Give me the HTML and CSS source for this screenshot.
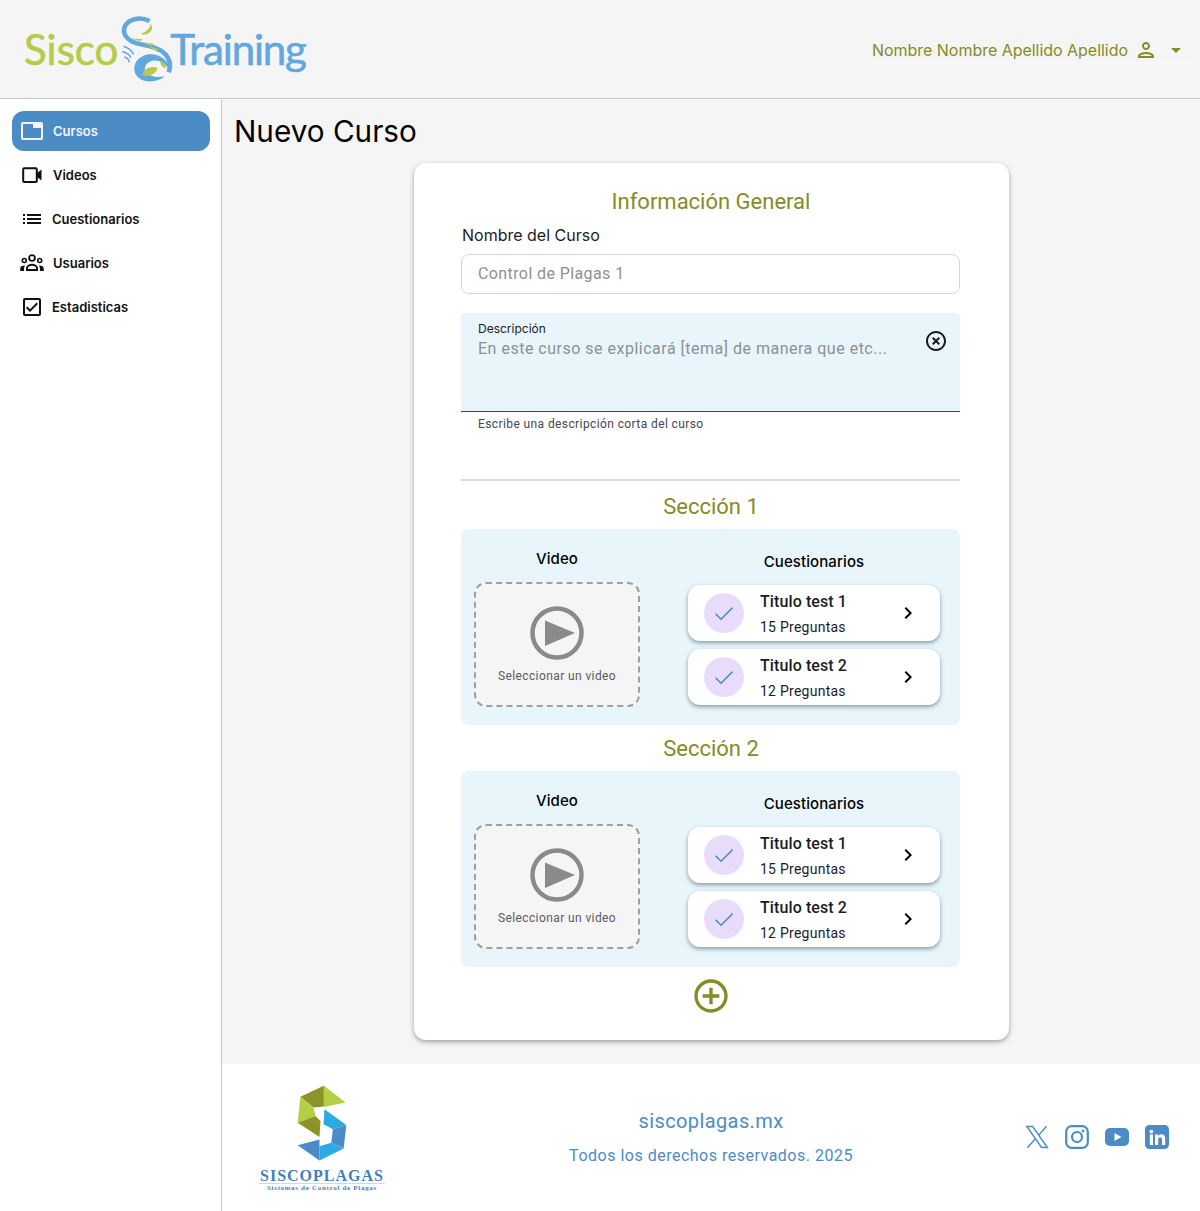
FILE: index.html
```html
<!DOCTYPE html>
<html lang="es">
<head>
  <meta charset="UTF-8">
  <meta name="viewport" content="width=device-width, initial-scale=1.0">
  <title>Nuevo Curso</title>
  <link rel="stylesheet" href="styles.css">
</head>
<body>
  <header class="topbar">
    <div class="brand">
      <span class="brand-sisco">Sisco</span>
      <svg class="brand-mark" viewBox="0 0 170 210" aria-hidden="true">
        <path d="M88 24C62 10 26 16 14 40 6 60 18 78 42 88 72 99 112 98 136 124 150 140 152 160 146 178" fill="none" stroke="#62a8df" stroke-width="14"/>
        <path d="M46 150C36 172 46 198 76 204 98 208 120 202 134 190 112 195 90 192 78 178 70 168 74 156 86 148 104 136 130 142 150 172 144 136 112 120 84 124 66 128 52 138 46 150Z" fill="#62a8df"/>
        <path d="M10 100C22 104 34 112 40 124M6 116C18 118 28 124 32 134M12 132C22 134 26 140 28 148" fill="none" stroke="#62a8df" stroke-width="4.5"/>
        <path d="M92 30C90 46 80 56 62 62 76 70 92 60 96 46Z" fill="#b5cc4a"/>
        <path d="M34 76L68 79 60 85ZM64 88L102 92 92 99ZM86 100L118 109 106 113Z" fill="#b5cc4a"/>
        <path d="M66 186C70 166 92 158 112 164 110 180 92 192 66 186Z" fill="#b5cc4a"/>
        <path d="M120 144C130 146 136 152 138 166 128 164 120 156 120 144Z" fill="#b5cc4a"/>
      </svg>
      <span class="brand-training">Training</span>
    </div>
    <div class="user-menu">
      <span class="user-name">Nombre Nombre Apellido Apellido</span>
      <svg class="icon" viewBox="0 0 24 24"><path d="M12 6c1.1 0 2 .9 2 2s-.9 2-2 2-2-.9-2-2 .9-2 2-2m0 10c2.7 0 5.8 1.29 6 2H6c.23-.72 3.31-2 6-2m0-12C9.79 4 8 5.79 8 8s1.79 4 4 4 4-1.79 4-4-1.79-4-4-4zm0 10c-2.67 0-8 1.34-8 4v2h16v-2c0-2.66-5.33-4-8-4z"/></svg>
      <svg class="icon" viewBox="0 0 24 24"><path d="M7 10l5 5 5-5z"/></svg>
    </div>
  </header>

  <div class="layout">
    <nav class="sidebar">
      <a class="nav-item active">
        <svg class="icon" viewBox="0 0 24 24"><path d="M21 3H3c-1.1 0-2 .9-2 2v14c0 1.1.9 2 2 2h18c1.1 0 2-.9 2-2V5c0-1.1-.9-2-2-2zm0 16H3V5h10v4h8v10z"/></svg>
        <span>Cursos</span>
      </a>
      <a class="nav-item">
        <svg class="icon" viewBox="0 0 24 24"><rect x="3.2" y="5.2" width="13.6" height="13.8" rx="1" fill="none" stroke="currentColor" stroke-width="2"/><path d="M17 10l4.500-3.500v11L17 14z"/></svg>
        <span>Videos</span>
      </a>
      <a class="nav-item tight">
        <svg class="icon" viewBox="0 0 24 24"><path d="M3 13h2v-2H3v2zm0 4h2v-2H3v2zm0-8h2V7H3v2zm4 4h14v-2H7v2zm0 4h14v-2H7v2zM7 7v2h14V7H7z"/></svg>
        <span>Cuestionarios</span>
      </a>
      <a class="nav-item">
        <svg class="icon" viewBox="0 0 24 24"><circle cx="12" cy="7" r="2.900" fill="none" stroke="currentColor" stroke-width="1.800"/><circle cx="4.300" cy="9.500" r="2" fill="none" stroke="currentColor" stroke-width="1.600"/><circle cx="19.700" cy="9.500" r="2" fill="none" stroke="currentColor" stroke-width="1.600"/><path d="M7 19v-1.500c0-2.300 2.400-3.700 5-3.700s5 1.400 5 3.700V19z" fill="none" stroke="currentColor" stroke-width="2"/><path d="M.2 20v-2.300c0-2 1.800-3.200 4.800-3.200-.6.900-.9 1.900-.9 3v2.500zM23.800 20v-2.300c0-2-1.800-3.200-4.800-3.200.6.900.9 1.900.9 3v2.500z"/></svg>
        <span>Usuarios</span>
      </a>
      <a class="nav-item tight">
        <svg class="icon" viewBox="0 0 24 24"><path d="M19 3H5c-1.1 0-2 .9-2 2v14c0 1.1.9 2 2 2h14c1.1 0 2-.9 2-2V5c0-1.1-.9-2-2-2zm0 16H5V5h14v14zM17.99 9l-1.41-1.42-6.59 6.59-2.58-2.57-1.42 1.41 4 3.99z"/></svg>
        <span>Estadisticas</span>
      </a>
    </nav>

    <div class="content">
      <main class="main">
        <h1 class="page-title">Nuevo Curso</h1>

        <form class="card">
          <h2 class="olive-title">Información General</h2>
          <label class="field-label">Nombre del Curso</label>
          <div class="text-input">Control de Plagas 1</div>

          <div class="filled-input">
            <div>
              <div class="filled-label">Descripción</div>
              <div class="filled-value">En este curso se explicará [tema] de manera que etc...</div>
            </div>
            <svg class="icon" viewBox="0 0 24 24"><path d="M14.59 8L12 10.59 9.41 8 8 9.41 10.59 12 8 14.59 9.41 16 12 13.41 14.59 16 16 14.59 13.41 12 16 9.41 14.59 8zM12 2C6.47 2 2 6.47 2 12s4.47 10 10 10 10-4.47 10-10S17.53 2 12 2zm0 18c-4.41 0-8-3.59-8-8s3.59-8 8-8 8 3.59 8 8-3.59 8-8 8z"/></svg>
          </div>
          <div class="helper">Escribe una descripción corta del curso</div>

          <hr class="divider">

          <h2 class="olive-title section-title">Sección 1</h2>
          <section class="panel">
            <div class="video-col">
              <h3 class="col-title">Video</h3>
              <div class="dropzone">
                <svg class="play" viewBox="0 0 54 54"><circle cx="27" cy="27" r="24.5" fill="none" stroke="#8a8a8a" stroke-width="4.5"/><path d="M15 14.5L45 27 15 40z" fill="#8a8a8a"/></svg>
                <span>Seleccionar un video</span>
              </div>
            </div>
            <div class="quiz-col">
              <h3 class="col-title quiz-title">Cuestionarios</h3>
              <div class="quiz">
                <span class="quiz-check"><svg viewBox="0 0 24 24"><path d="M3.6 12.8L9 18.2 20.6 6.6"/></svg></span>
                <div class="quiz-text"><strong>Titulo test 1</strong><span>15 Preguntas</span></div>
                <svg class="icon" viewBox="0 0 24 24"><path d="M10 6L8.59 7.41 13.17 12l-4.58 4.59L10 18l6-6z"/></svg>
              </div>
              <div class="quiz">
                <span class="quiz-check"><svg viewBox="0 0 24 24"><path d="M3.6 12.8L9 18.2 20.6 6.6"/></svg></span>
                <div class="quiz-text"><strong>Titulo test 2</strong><span>12 Preguntas</span></div>
                <svg class="icon" viewBox="0 0 24 24"><path d="M10 6L8.59 7.41 13.17 12l-4.58 4.59L10 18l6-6z"/></svg>
              </div>
            </div>
          </section>

          <h2 class="olive-title section-title">Sección 2</h2>
          <section class="panel">
            <div class="video-col">
              <h3 class="col-title">Video</h3>
              <div class="dropzone">
                <svg class="play" viewBox="0 0 54 54"><circle cx="27" cy="27" r="24.5" fill="none" stroke="#8a8a8a" stroke-width="4.5"/><path d="M15 14.5L45 27 15 40z" fill="#8a8a8a"/></svg>
                <span>Seleccionar un video</span>
              </div>
            </div>
            <div class="quiz-col">
              <h3 class="col-title quiz-title">Cuestionarios</h3>
              <div class="quiz">
                <span class="quiz-check"><svg viewBox="0 0 24 24"><path d="M3.6 12.8L9 18.2 20.6 6.6"/></svg></span>
                <div class="quiz-text"><strong>Titulo test 1</strong><span>15 Preguntas</span></div>
                <svg class="icon" viewBox="0 0 24 24"><path d="M10 6L8.59 7.41 13.17 12l-4.58 4.59L10 18l6-6z"/></svg>
              </div>
              <div class="quiz">
                <span class="quiz-check"><svg viewBox="0 0 24 24"><path d="M3.6 12.8L9 18.2 20.6 6.6"/></svg></span>
                <div class="quiz-text"><strong>Titulo test 2</strong><span>12 Preguntas</span></div>
                <svg class="icon" viewBox="0 0 24 24"><path d="M10 6L8.59 7.41 13.17 12l-4.58 4.59L10 18l6-6z"/></svg>
              </div>
            </div>
          </section>

          <svg class="add-section" viewBox="0 0 24 24"><path d="M13 7h-2v4H7v2h4v4h2v-4h4v-2h-4V7zm-1-5C6.48 2 2 6.48 2 12s4.48 10 10 10 10-4.48 10-10S17.52 2 12 2zm0 18c-4.41 0-8-3.59-8-8s3.59-8 8-8 8 3.59 8 8-3.59 8-8 8z"/></svg>
        </form>
      </main>

      <footer class="footer">
        <div class="footer-logo">
          <svg class="footer-mark" viewBox="170 30 155 232" aria-hidden="true">
            <path d="M183 68L253 35V97L222 100Z" fill="#8c9429"/>
            <path d="M253 35L318 85 253 98Z" fill="#b5cf45"/>
            <path d="M183 68L222 100 228 125 175 145Z" fill="#b5cf45"/>
            <path d="M175 145L228 125 243 140 240 188Z" fill="#8c9429"/>
            <path d="M255 105L320 152 280 165 252 150Z" fill="#2caae2"/>
            <path d="M320 152L312 222 275 205 280 165Z" fill="#4b8cc8"/>
            <path d="M312 222L240 258V215L275 205Z" fill="#2caae2"/>
            <path d="M175 212L240 195V258Z" fill="#4b8cc8"/>
          </svg>
          <div class="footer-name">SISCOPLAGAS</div>
          <div class="footer-tag">Sistemas de Control de Plagas</div>
        </div>
        <div class="footer-center">
          <div class="footer-site">siscoplagas.mx</div>
          <div class="footer-rights">Todos los derechos reservados. 2025</div>
        </div>
        <div class="socials">
          <svg class="social" viewBox="0 0 24 24"><path d="M1.800 1.500h5.800l14.800 21h-5.800zM21.500 1.200L13.300 10.600M10.700 13.500L2.300 22.800" fill="none" stroke="currentColor" stroke-width="1.400"/></svg>
          <svg class="social" viewBox="0 0 24 24"><rect x="1.2" y="1.2" width="21.6" height="21.6" rx="5.5" fill="none" stroke="currentColor" stroke-width="2.2"/><circle cx="12" cy="12" r="5" fill="none" stroke="currentColor" stroke-width="2.2"/><circle cx="18" cy="6" r="1.4"/></svg>
          <svg class="social" viewBox="0 0 24 24"><rect y="3" width="24" height="18" rx="5"/><path d="M9.5 8l7 4-7 4z" fill="#fff"/></svg>
          <svg class="social" viewBox="0 0 24 24"><rect width="24" height="24" rx="4.5"/><circle cx="6.4" cy="6.6" r="1.9" fill="#fff"/><path d="M4.8 9.6h3.2V20H4.8zM10 9.6h3v1.5c.7-1.1 1.9-1.8 3.300-1.800 2.800 0 3.900 1.800 3.900 4.700V20H17v-5.400c0-1.500-.5-2.400-1.800-2.400-1.400 0-2 1-2 2.500V20H10z" fill="#fff"/></svg>
        </div>
      </footer>
    </div>
  </div>
</body>
</html>
```

FILE: styles.css
```css
* {
  box-sizing: border-box;
}
body {
  margin: 0;
  background-color: #f5f5f5;
  font-family: Inter, sans-serif;
  color: #000;
}
.icon {
  width: 24px;
  height: 24px;
  flex: none;
  fill: currentColor;
}

/* top bar */
.topbar {
  height: 99px;
  display: flex;
  align-items: center;
  justify-content: space-between;
  padding: 0 12px 0 24px;
  border-bottom: 1px solid #c8c8c8;
}
.brand {
  display: flex;
  align-items: center;
  font-family: Lato, sans-serif;
  font-size: 42px;
  line-height: 1;
  -webkit-text-stroke: 0.6px currentColor;
}
.brand-sisco {
  color: #b5cc4a;
}
.brand-training {
  color: #62a8df;
  margin-left: -7px;
  letter-spacing: -1.2px;
}
.brand-mark {
  width: 57px;
  height: 70px;
  margin-left: 2px;
  margin-top: -3px;
}
.user-menu {
  display: flex;
  align-items: center;
  gap: 6px;
  height: 24px;
  margin-top: 3px;
  width: 316px;
  color: #848c24;
  border-bottom: 1px solid #fafafa;
  box-sizing: content-box;
  padding-bottom: 0;
}
.user-name {
  font-size: 16px;
  letter-spacing: -0.03px;
  white-space: nowrap;
}

/* side nav */
.layout {
  display: flex;
  min-height: 1112px;
}
.sidebar {
  width: 222px;
  flex: none;
  background-color: #fff;
  border-right: 1px solid #c8c8c8;
  padding: 12px 11px 0 12px;
  display: flex;
  flex-direction: column;
  gap: 4px;
}
.nav-item {
  height: 40px;
  display: flex;
  align-items: center;
  gap: 9px;
  padding-left: 8px;
  font-size: 13px;
  font-weight: 600;
  color: #111;
  border-radius: 12px;
}
.nav-item.tight {
  gap: 8px;
}
.nav-item.active {
  background-color: #4c8cc6;
  color: #f2f6fa;
}

/* main area */
.content {
  flex: 1;
  min-width: 0;
}
.main {
  height: 965px;
  padding: 12px 12px 0;
}
.page-title {
  margin: 0;
  font-size: 29.7px;
  font-weight: 400;
  line-height: 40px;
}
.card {
  width: 595px;
  height: 877px;
  margin: 12px auto 0;
  padding: 25px 48.5px 0 47.5px;
  display: flex;
  flex-direction: column;
  background-color: #fff;
  border-radius: 12px;
  box-shadow: 0 2px 5px rgba(0, 0, 0, 0.35);
  font-family: Roboto, sans-serif;
}
.olive-title {
  margin: 0;
  padding-left: 1px;
  text-align: center;
  font-size: 22px;
  font-weight: 400;
  line-height: 28px;
  color: #848c24;
}
.section-title {
  margin: 10px 0 8px;
}
.field-label {
  display: block;
  margin-top: 7px;
  padding-left: 1px;
  font-family: Inter, sans-serif;
  font-size: 16px;
  line-height: 24px;
  color: #1c1c1c;
}
.text-input {
  height: 40px;
  flex: none;
  margin-top: 7px;
  padding: 0 16px;
  border: 1px solid #d6d6d6;
  border-radius: 8px;
  font-size: 16px;
  line-height: 38px;
  letter-spacing: 0.4px;
  color: #8f8f8f;
}
.filled-input {
  height: 99px;
  flex: none;
  margin-top: 19px;
  padding: 9px 12px 0 17px;
  display: flex;
  justify-content: space-between;
  background-color: #e8f6fc;
  border-bottom: 1px solid #44464f;
  border-radius: 4px 4px 0 0;
}
.filled-input .icon {
  margin-top: 7px;
  color: #1c1c1c;
}
.filled-label {
  font-family: Inter, sans-serif;
  font-size: 12px;
  line-height: 14px;
  color: #1c1c1c;
}
.filled-value {
  margin-top: 1px;
  font-size: 16px;
  line-height: 24px;
  letter-spacing: 0.5px;
  color: #8a9196;
}
.helper {
  padding: 4px 17px 0;
  font-size: 12px;
  line-height: 16px;
  letter-spacing: 0.4px;
  color: #44464f;
}
.divider {
  width: 100%;
  height: 2px;
  flex: none;
  margin: 47px 0 2px;
  border: none;
  background-color: #dcdcdc;
}

/* section panels */
.panel {
  height: 196px;
  flex: none;
  padding: 0 20px 0 13px;
  display: flex;
  justify-content: space-between;
  background-color: #e8f6fc;
  border-radius: 8px;
}
.col-title {
  margin: 0;
  text-align: center;
  font-family: Inter, sans-serif;
  font-size: 15px;
  font-weight: 500;
  line-height: 24px;
  letter-spacing: 0.1px;
}
.video-col {
  width: 166px;
  padding-top: 18px;
}
.dropzone {
  height: 125px;
  margin-top: 11px;
  display: flex;
  flex-direction: column;
  align-items: center;
  padding-top: 22px;
  background-color: #f5f5f5;
  border: 2px dashed #a0a0a0;
  border-radius: 12px;
  font-size: 12px;
  letter-spacing: 0.4px;
  color: #5a5a5f;
}
.play {
  width: 54px;
  height: 54px;
  margin-bottom: 9px;
}
.quiz-col {
  width: 252px;
  padding-top: 21px;
}
.quiz-title {
  margin-bottom: 11px;
}
.quiz {
  height: 56px;
  margin-bottom: 8px;
  display: flex;
  align-items: center;
  padding: 0 20px 0 16px;
  background-color: #fff;
  border-radius: 12px;
  box-shadow: 0 2px 4px rgba(60, 80, 90, 0.55);
}
.quiz-check {
  width: 40px;
  height: 40px;
  flex: none;
  display: flex;
  align-items: center;
  justify-content: center;
  background-color: #e9dcfb;
  border-radius: 50%;
}
.quiz-check svg {
  width: 24px;
  height: 24px;
  fill: none;
  stroke: #4c8cc6;
  stroke-width: 1.6;
}
.quiz-text {
  flex: 1;
  margin-left: 16px;
  padding-top: 2px;
  display: flex;
  flex-direction: column;
  gap: 5px;
  color: #1c1c1f;
}
.quiz-text strong {
  font-size: 16px;
  font-weight: 500;
  line-height: 20px;
  letter-spacing: 0.1px;
}
.quiz-text span {
  font-size: 14px;
  line-height: 20px;
  letter-spacing: 0.25px;
}
.add-section {
  display: block;
  width: 40px;
  height: 40px;
  flex: none;
  margin: 9px auto 0;
  fill: #848c24;
}

/* footer */
.footer {
  height: 147px;
  display: grid;
  grid-template-columns: 1fr auto 1fr;
  align-items: center;
  padding: 0 31px;
  background-color: #fff;
  font-family: Roboto, sans-serif;
  color: #4c8cc6;
}
.footer-logo {
  width: 126px;
  margin-left: 6px;
  text-align: center;
  font-family: "Liberation Serif", serif;
  font-weight: 700;
}
.footer-mark {
  display: block;
  width: 52px;
  height: 78px;
  margin: 0 auto;
}
.footer-name {
  margin-top: 6px;
  font-size: 16px;
  line-height: 15px;
  letter-spacing: 1px;
  white-space: nowrap;
  border-bottom: 1px solid #c7dcef;
  color: #3f7fc0;
}
.footer-tag {
  font-size: 7px;
  line-height: 8px;
  letter-spacing: 0.7px;
  white-space: nowrap;
  color: #3f7fc0;
}
.footer-center {
  text-align: center;
  letter-spacing: 0.5px;
}
.footer-site {
  font-size: 20px;
  line-height: 28px;
  letter-spacing: 0.4px;
}
.footer-rights {
  margin-top: 9px;
  font-size: 16px;
  line-height: 24px;
}
.socials {
  justify-self: end;
  display: flex;
  gap: 16px;
  margin-top: -1px;
}
.social {
  width: 24px;
  height: 24px;
  fill: currentColor;
}
```
